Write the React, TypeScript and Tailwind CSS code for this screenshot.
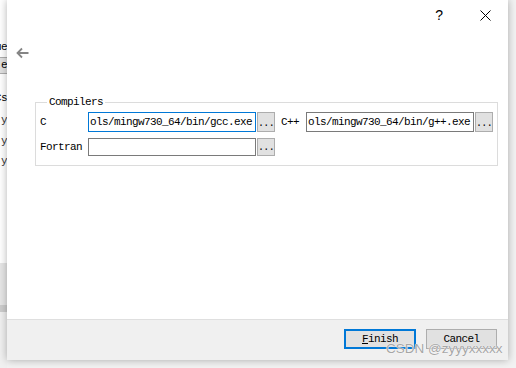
import React from 'react';

const mono = "font-['Liberation_Mono','Noto_Sans_CJK_SC',monospace] text-[11px] tracking-[-0.6px]";

const PathBox: React.FC<{ value?: string; focused?: boolean; tall?: boolean }> = ({ value, focused, tall }) => (
  <div
    className={`w-[168px] ${tall ? 'h-[20px]' : 'h-[18px]'} border ${focused ? 'border-[#0078d7]' : 'border-[#7a7a7a]'} bg-white px-[1px] flex items-center overflow-hidden whitespace-nowrap text-black leading-[14px]`}
  >
    {value}
  </div>
);

const BrowseButton: React.FC<{ tall?: boolean }> = ({ tall }) => (
  <div
    className={`ml-[1px] w-[18px] ${tall ? 'h-[20px]' : 'h-[18px]'} bg-[#e1e1e1] border border-[#adadad] flex items-end justify-center pb-[2px] text-[10px] leading-[10px] text-black`}
  >
    ...
  </div>
);

const BackWindow: React.FC = () => (
  <div className={`w-[7px] h-full flex flex-col bg-[#f0f0f0] ${mono}`}>
    <div className="h-[42px] bg-white" />
    <div className="h-[10px] bg-white flex justify-end items-center whitespace-nowrap leading-[10px]">ue</div>
    <div className="h-[5px] bg-white" />
    <div className="h-[17px] bg-[#e1e1e1] border-y border-[#adadad] flex justify-end items-center whitespace-nowrap">e</div>
    <div className="h-[19px] bg-white" />
    <div className="h-[10px] bg-white flex justify-end items-center whitespace-nowrap leading-[10px]">Cs</div>
    <div className="h-[12px] bg-white" />
    <div className="h-[10px] bg-white flex justify-end items-center whitespace-nowrap leading-[10px] text-[#333]">y</div>
    <div className="h-[11px] bg-white" />
    <div className="h-[10px] bg-white flex justify-end items-center whitespace-nowrap leading-[10px] text-[#333]">y</div>
    <div className="h-[10px] bg-white" />
    <div className="h-[10px] bg-white flex justify-end items-center whitespace-nowrap leading-[10px] text-[#333]">y</div>
    <div className="h-[97px] bg-white" />
    <div className="h-[42px] bg-[#e6e6e6]" />
    <div className="h-[7px] bg-[#cdcdcd]" />
  </div>
);

export default function App() {
  return (
    <div className="relative w-[516px] h-[368px] overflow-hidden bg-[#f2f2f2]">
      <BackWindow />

      <div className={`absolute left-[7px] top-0 w-[501px] h-[360px] bg-white flex flex-col shadow-[0_0_8px_rgba(0,0,0,0.3)] ${mono}`}>
        {/* title bar */}
        <div className="h-[30px] flex items-center justify-end pr-[17px] shrink-0">
          <span className="font-['Liberation_Sans',sans-serif] text-[14px] tracking-normal text-black leading-none mb-[1px]">?</span>
          <svg className="ml-[37px]" width="11" height="11" viewBox="0 0 11 11">
            <path d="M0.5 0.5L10.5 10.5M10.5 0.5L0.5 10.5" stroke="#000" strokeWidth="1" />
          </svg>
        </div>

        {/* page */}
        <div className="flex-1 flex flex-col">
          <div className="mt-[17px] ml-[9px] h-[12px] w-[13px]">
            <svg width="13" height="12" viewBox="0 0 13 12">
              <path d="M12.5 6H1.5M6 1.5L1.5 6L6 10.5" fill="none" stroke="#858585" strokeWidth="1.8" />
            </svg>
          </div>

          <fieldset className="mt-[37px] ml-[28px] w-[463px] border border-[#dcdcdc] pl-[4px] pt-[4px] pb-[9px] flex flex-col gap-[6px]">
            <legend className="ml-[7px] px-[2px] leading-[12px] text-black">Compilers</legend>
            <div className="flex items-center h-[20px]">
              <span className="w-[48px] text-black">C</span>
              <PathBox value="ols/mingw730_64/bin/gcc.exe" focused tall />
              <BrowseButton tall />
              <span className="ml-[6px] w-[25px] text-black">C++</span>
              <PathBox value="ols/mingw730_64/bin/g++.exe" tall />
              <BrowseButton tall />
            </div>
            <div className="flex items-center h-[18px]">
              <span className="w-[48px] text-black">Fortran</span>
              <PathBox />
              <BrowseButton />
            </div>
          </fieldset>
        </div>

        {/* footer */}
        <div className="h-[41px] shrink-0 border-t border-[#dfdfdf] bg-[#f0f0f0] flex justify-end items-start pt-[9px] pr-[11px] gap-[10px]">
          <button className="w-[72px] h-[20px] bg-[#e1e1e1] border-2 border-[#0078d7] flex items-center justify-center text-black leading-none">
            <span><span className="underline">F</span>inish</span>
          </button>
          <button className="w-[71px] h-[20px] bg-[#e1e1e1] border border-[#adadad] flex items-center justify-center text-black leading-none">
            Cancel
          </button>
        </div>
      </div>

      <div className="absolute left-[386px] top-[340px] font-['Liberation_Sans',sans-serif] text-[13.5px] leading-[18px] text-[#a6a6a6] [text-shadow:0_0_1px_#fff,0_0_1px_#fff] whitespace-nowrap">
        CSDN @zyyyxxxxx
      </div>
    </div>
  );
}
